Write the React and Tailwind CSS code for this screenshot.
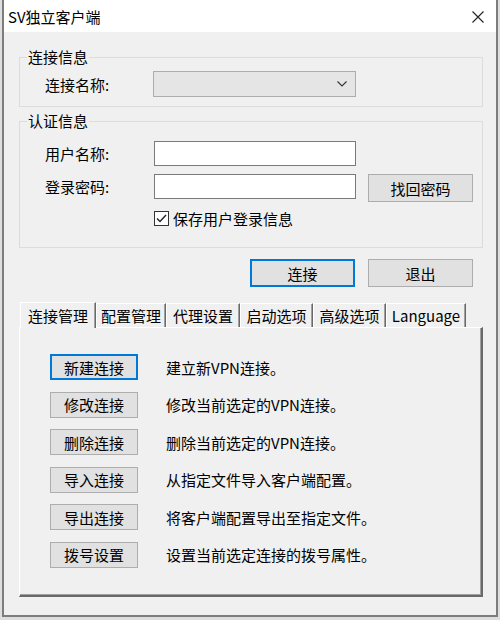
import React from 'react';

const font = { fontFamily: '"Noto Sans CJK SC", "Microsoft YaHei", sans-serif' };

const actions = [
  { label: '新建连接', desc: '建立新VPN连接。', primary: true },
  { label: '修改连接', desc: '修改当前选定的VPN连接。' },
  { label: '删除连接', desc: '删除当前选定的VPN连接。' },
  { label: '导入连接', desc: '从指定文件导入客户端配置。' },
  { label: '导出连接', desc: '将客户端配置导出至指定文件。' },
  { label: '拨号设置', desc: '设置当前选定连接的拨号属性。' },
];

const tabs = [
  { label: '连接管理', w: 'w-[76px]' },
  { label: '配置管理', w: 'w-[70px]' },
  { label: '代理设置', w: 'w-[74px]' },
  { label: '启动选项', w: 'w-[73px]' },
  { label: '高级选项', w: 'w-[73px]' },
  { label: 'Language', w: 'w-[80px]' },
];

function WinButton({ children, primary, className = '' }) {
  return (
    <button
      className={
        'flex items-center justify-center bg-[#e1e1e1] text-[15px] leading-none text-black ' +
        (primary
          ? 'border border-[#0078d7] shadow-[inset_0_0_0_1px_#0078d7] '
          : 'border border-[#adadad] ') +
        className
      }
    >
      {children}
    </button>
  );
}

function Group({ title, children, className = '' }) {
  return (
    <fieldset className={'w-[464px] border border-[#dcdcdc] ' + className}>
      <legend className="ml-[7px] px-[1px] text-[15px] leading-[16px] text-black">{title}</legend>
      {children}
    </fieldset>
  );
}

export default function App() {
  return (
    <div className="w-[500px] h-[620px] bg-[#dedede] overflow-hidden" style={font}>
      <div className="ml-[2px] w-[496px] h-[617px] flex flex-col bg-[#f0f0f0] border-x-2 border-b-2 border-[#7d7d7d]">
        {/* title bar */}
        <div className="h-[32px] shrink-0 bg-white flex items-center justify-between pl-[4px] pr-[12px]">
          <span className="text-[15px] leading-none text-black">SV独立客户端</span>
          <svg width="12" height="12" viewBox="0 0 12 12" className="mt-[2px]">
            <path d="M0.5 0.5L11.5 11.5M11.5 0.5L0.5 11.5" stroke="#222" strokeWidth="1.1" fill="none" />
          </svg>
        </div>

        <div className="flex flex-col pl-[15px]">
          <Group title="连接信息" className="mt-[17px]">
            <div className="flex items-center mt-[6px] pb-[9px] pl-[25px]">
              <span className="w-[108px] text-[15px] leading-none">连接名称:</span>
              <div className="w-[203px] h-[26px] bg-[#e5e5e5] border border-[#adadad] flex items-center justify-end pr-[8px]">
                <svg width="10" height="6" viewBox="0 0 10 6">
                  <path d="M0.5 0.5L5 5L9.5 0.5" stroke="#333" strokeWidth="1.1" fill="none" />
                </svg>
              </div>
            </div>
          </Group>

          <Group title="认证信息" className="mt-[6px]">
            <div className="flex flex-col pl-[25px] pb-[20px]">
              <div className="flex items-center mt-[12px]">
                <span className="w-[109px] text-[15px] leading-none">用户名称:</span>
                <div className="w-[202px] h-[25px] bg-white border border-[#7a7a7a]" />
              </div>
              <div className="flex items-start mt-[8px]">
                <span className="w-[109px] h-[25px] flex items-center text-[15px] leading-none">登录密码:</span>
                <div className="w-[202px] h-[25px] bg-white border border-[#7a7a7a]" />
                <WinButton className="ml-[12px] w-[105px] h-[28px]">找回密码</WinButton>
              </div>
              <div className="flex items-center mt-[8px] ml-[109px] h-[17px]">
                <div className="w-[15px] h-[15px] border border-[#333] bg-white flex items-center justify-center">
                  <svg width="11" height="9" viewBox="0 0 11 9">
                    <path d="M1 4.5L4 7.5L10 1" stroke="#222" strokeWidth="1.4" fill="none" />
                  </svg>
                </div>
                <span className="ml-[4px] text-[15px] leading-none">保存用户登录信息</span>
              </div>
            </div>
          </Group>

          <div className="flex gap-[13px] pl-[231px] mt-[11px]">
            <WinButton primary className="w-[105px] h-[28px]">连接</WinButton>
            <WinButton className="w-[105px] h-[28px]">退出</WinButton>
          </div>

          {/* tabs */}
          <div className="flex items-end mt-[14px] h-[26px] pl-[1px]">
            {tabs.map((t, i) => (
              <div
                key={t.label}
                className={
                  'flex items-center justify-center text-[15px] leading-none border-t border-l border-white border-r border-r-[#696969] shadow-[inset_-1px_0_0_#a0a0a0] ' +
                  t.w +
                  (i === 0 ? ' h-[26px] bg-[#f0f0f0] relative z-10 -mb-[1px]' : ' h-[24px]')
                }
              >
                {t.label}
              </div>
            ))}
          </div>

          <div className="w-[464px] h-[270px] border-t border-l border-white border-r-2 border-b-2 border-r-[#696969] border-b-[#696969] shadow-[inset_-1px_-1px_0_#a0a0a0]">
            <div className="flex flex-col gap-[11.6px] pt-[26px] pl-[30px]">
              {actions.map((a) => (
                <div key={a.label} className="flex items-center">
                  <WinButton primary={a.primary} className="w-[88px] h-[26px]">{a.label}</WinButton>
                  <span className="ml-[28px] text-[15px] leading-none">{a.desc}</span>
                </div>
              ))}
            </div>
          </div>
        </div>
      </div>
    </div>
  );
}
